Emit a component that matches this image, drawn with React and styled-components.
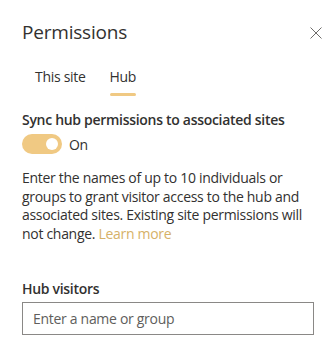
import React, { useState } from 'react';
import styled, { createGlobalStyle } from 'styled-components';

const GlobalStyle = createGlobalStyle`
    body {
        margin: 0;
        background: #ffffff;
        font-family: "Open Sans", "Noto Sans", sans-serif;
        letter-spacing: -0.3px;
        color: #323130;
    }
`;

const Panel = styled.div`
    width: 334px;
    height: 340px;
    box-sizing: border-box;
    padding: 18px 0 0 22px;
    overflow: hidden;
`;

const Header = styled.div`
    display: flex;
    align-items: center;
    justify-content: space-between;
    height: 28px;
    padding-right: 12px;
`;

const Title = styled.h1`
    margin: 0;
    font-size: 19px;
    font-weight: 400;
    line-height: 28px;
    letter-spacing: -0.2px;
    color: #323130;
`;

const CloseButton = styled.button`
    display: flex;
    align-items: center;
    justify-content: center;
    width: 13px;
    height: 13px;
    padding: 0;
    margin-top: 2px;
    border: none;
    background: none;
    color: #6e6c6a;
`;

const Tabs = styled.div`
    display: flex;
    margin-top: 8px;
    margin-left: 5px;
    gap: 8px;
`;

const Tab = styled.button`
    position: relative;
    height: 44px;
    padding: 0 8px;
    border: none;
    background: none;
    font-family: inherit;
    font-size: 14px;
    letter-spacing: inherit;
    color: #323130;
    font-weight: ${p => (p.$active ? 500 : 400)};

    &::after {
        content: '';
        display: ${p => (p.$active ? 'block' : 'none')};
        position: absolute;
        left: 8px;
        right: 8px;
        bottom: 2px;
        height: 3px;
        border-radius: 2px;
        background: #f0c983;
    }
`;

const Label = styled.div`
    margin-top: 12px;
    padding-right: 22px;
    font-size: 14px;
    font-weight: 600;
    line-height: 20px;
`;

const ToggleRow = styled.div`
    display: flex;
    align-items: center;
    gap: 7px;
    margin-top: 4px;
    font-size: 14px;
`;

const Toggle = styled.button`
    display: flex;
    align-items: center;
    justify-content: ${p => (p.$on ? 'flex-end' : 'flex-start')};
    width: 40px;
    height: 20px;
    padding: 0 4px;
    border: none;
    border-radius: 10px;
    background: ${p => (p.$on ? '#f0c983' : '#c8c6c4')};

    &::before {
        content: '';
        width: 12px;
        height: 12px;
        border-radius: 50%;
        background: #ffffff;
    }
`;

const Description = styled.p`
    margin: 15px 0 0;
    padding-right: 22px;
    font-size: 14px;
    line-height: 18.5px;
    color: #323130;
`;

const Link = styled.a`
    color: #d6b168;
    text-decoration: none;
`;

const FieldLabel = styled.label`
    display: block;
    margin-top: 36px;
    font-size: 14px;
    font-weight: 600;
    line-height: 20px;
`;

const Input = styled.input`
    display: block;
    width: 292px;
    height: 33px;
    margin-top: 3px;
    box-sizing: border-box;
    padding: 0 10px;
    border: 1px solid #8a8886;
    border-radius: 0;
    font-family: inherit;
    font-size: 14px;
    letter-spacing: inherit;
    color: #323130;

    &::placeholder {
        color: #605e5c;
    }
`;

export default function App() {
    const [tab, setTab] = useState('hub');
    const [sync, setSync] = useState(true);

    return (
        <>
            <GlobalStyle />
            <Panel>
                <Header>
                    <Title>Permissions</Title>
                    <CloseButton aria-label="Close">
                        <svg width="12" height="12" viewBox="0 0 12 12">
                            <path d="M0.5 0.5 L11.5 11.5 M11.5 0.5 L0.5 11.5" stroke="currentColor" strokeWidth="1" fill="none" />
                        </svg>
                    </CloseButton>
                </Header>
                <Tabs>
                    <Tab $active={tab === 'site'} onClick={() => setTab('site')}>This site</Tab>
                    <Tab $active={tab === 'hub'} onClick={() => setTab('hub')}>Hub</Tab>
                </Tabs>
                <Label>Sync hub permissions to associated sites</Label>
                <ToggleRow>
                    <Toggle $on={sync} onClick={() => setSync(!sync)} aria-label="Sync" />
                    <span>{sync ? 'On' : 'Off'}</span>
                </ToggleRow>
                <Description>
                    Enter the names of up to 10 individuals or groups to grant visitor access to the hub and associated sites. Existing site permissions will not change. <Link href="#">Learn more</Link>
                </Description>
                <FieldLabel>Hub visitors</FieldLabel>
                <Input placeholder="Enter a name or group" />
            </Panel>
        </>
    );
}
